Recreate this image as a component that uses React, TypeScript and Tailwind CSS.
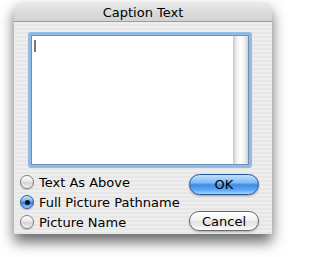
const Radio = ({ checked }: { checked?: boolean }) =>
  checked ? (
    <span className="relative flex h-[14px] w-[14px] shrink-0 items-center justify-center rounded-full border border-[#2d5c9e] bg-[linear-gradient(180deg,#cfe6ff_0%,#6aaef0_45%,#2f7fde_55%,#9fd0ff_100%)] shadow-[0_1px_1px_rgba(0,0,0,0.25)]">
      <span className="h-[5px] w-[5px] rounded-full bg-[#111]" />
    </span>
  ) : (
    <span className="h-[14px] w-[14px] shrink-0 rounded-full border border-[#7d7d7d] bg-[linear-gradient(180deg,#fdfdfd_0%,#e6e6e6_50%,#d2d2d2_55%,#f6f6f6_100%)] shadow-[0_1px_1px_rgba(0,0,0,0.2)]" />
  );

const options = [
  { label: "Text As Above", checked: false },
  { label: "Full Picture Pathname", checked: true },
  { label: "Picture Name", checked: false },
];

export default function App() {
  return (
    <div className="h-[257px] w-[286px] bg-white pl-[14px] pt-[2px] font-['DejaVu_Sans','Liberation_Sans',sans-serif] text-black">
      <div className="flex h-[232px] w-[258px] flex-col overflow-hidden rounded-t-[7px] shadow-[0_8px_14px_rgba(0,0,0,0.6)]">
        {/* Title bar */}
        <div className="flex h-[20px] shrink-0 items-center justify-center border-b border-[#9c9c9c] bg-[linear-gradient(180deg,#ececec_0%,#dcdcdc_50%,#d2d2d2_100%)] pt-[1px] text-[13px] leading-none">
          Caption Text
        </div>

        {/* Body */}
        <div className="flex flex-1 flex-col bg-[repeating-linear-gradient(180deg,#eeeeee_0px,#eeeeee_2px,#e7e7e7_2px,#e7e7e7_4px)] px-[6px] pt-[10px]">
          {/* Text field */}
          <div className="ml-[8px] flex h-[136px] w-[224px] rounded-[3px] bg-[#93bbe8] p-[3px]">
            <div className="flex flex-1 border border-[#6f8fb8] bg-white">
              <div className="flex-1 pl-[2px] pt-[4px]">
                <div className="h-[12px] w-[2px] bg-[#777]" />
              </div>
              <div className="w-[15px] border-l border-[#c9c9c9] bg-[linear-gradient(90deg,#d8d8d8_0%,#f4f4f4_25%,#ffffff_50%,#ececec_80%,#cfcfcf_100%)]" />
            </div>
          </div>

          {/* Options and buttons */}
          <div className="mt-[6px] flex justify-between pr-[7px]">
            <div className="flex flex-col gap-[4px]">
              {options.map((o) => (
                <div key={o.label} className="flex h-[16px] items-center gap-[5px] text-[13px] leading-none">
                  <Radio checked={o.checked} />
                  <span>{o.label}</span>
                </div>
              ))}
            </div>
            <div className="flex flex-col gap-[16px]">
              <button className="flex h-[21px] w-[70px] items-center justify-center rounded-full border border-[#24539a] bg-[linear-gradient(180deg,#c3e0ff_0%,#7fbaf6_40%,#3d8be6_52%,#5fa9f5_80%,#a8d6ff_100%)] text-[13px] leading-none shadow-[0_1px_2px_rgba(0,0,0,0.35)]">
                OK
              </button>
              <button className="flex h-[20px] w-[70px] items-center justify-center rounded-full border border-[#6a6a6a] bg-[linear-gradient(180deg,#ffffff_0%,#f2f2f2_45%,#e2e2e2_55%,#fafafa_100%)] text-[13px] leading-none shadow-[0_1px_2px_rgba(0,0,0,0.3)]">
                Cancel
              </button>
            </div>
          </div>
        </div>
      </div>
    </div>
  );
}
